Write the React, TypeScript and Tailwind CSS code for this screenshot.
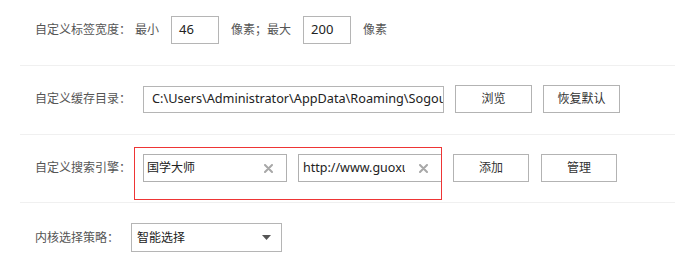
import React from "react";

const font = "font-['Noto_Sans','Noto_Sans_CJK_SC',sans-serif]";

const ClearIcon = () => (
  <svg width="9" height="9" viewBox="0 0 9 9" className="shrink-0 mr-[13px]">
    <path d="M1 1L8 8M8 1L1 8" stroke="#a8a8a8" strokeWidth="2" strokeLinecap="round" />
  </svg>
);

const Btn = ({ children, className }: { children: React.ReactNode; className?: string }) => (
  <button
    className={
      "h-[28px] border border-[#b3b3b3] bg-white text-[12px] text-[#333] flex items-center justify-center " +
      (className ?? "")
    }
  >
    {children}
  </button>
);

export default function App() {
  return (
    <div className={"w-[675px] h-[263px] bg-white text-[12px] text-[#555] overflow-hidden " + font}>
      <div className="ml-[20px]">
        {/* tab width */}
        <div className="h-[66px] border-b border-[#f0f0f0] pl-[15px] pt-[16px]">
          <div className="flex items-center h-[28px]">
            <span className="w-[100px]">自定义标签宽度：</span>
            <span>最小</span>
            <div className="ml-[12px] w-[48px] h-[28px] border border-[#b5b5b5] pl-[7px] flex items-center text-[13px] text-[#222]">
              46
            </div>
            <span className="ml-[12px]">像素；最大</span>
            <div className="ml-[12px] w-[48px] h-[28px] border border-[#b5b5b5] pl-[7px] flex items-center text-[13px] text-[#222]">
              200
            </div>
            <span className="ml-[12px]">像素</span>
          </div>
        </div>

        {/* cache dir */}
        <div className="h-[69px] border-b border-[#f0f0f0] pl-[15px] pt-[19px]">
          <div className="flex items-center h-[28px]">
            <span className="w-[108px]">自定义缓存目录：</span>
            <div className="w-[301px] h-[27px] border border-[#b5b5b5] pl-[8px] flex items-center overflow-hidden whitespace-nowrap text-[12.7px] text-[#222]">
              <span className="overflow-hidden whitespace-nowrap">C:\Users\Administrator\AppData\Roaming\Sogou</span>
            </div>
            <Btn className="ml-[11px] w-[77px]">浏览</Btn>
            <Btn className="ml-[11px] w-[77px]">恢复默认</Btn>
          </div>
        </div>

        {/* search engine */}
        <div className="relative h-[68px] border-b border-[#f0f0f0] pl-[15px] pt-[19px]">
          <div className="flex items-center h-[28px]">
            <span className="w-[108px]">自定义搜索引擎：</span>
            <div className="w-[144px] h-[28px] border border-[#b0b0b0] pl-[3px] flex items-center text-[12px] text-[#222]">
              <span className="flex-1 overflow-hidden whitespace-nowrap">国学大师</span>
              <ClearIcon />
            </div>
            <div className="ml-[11px] w-[144px] h-[28px] border border-[#b0b0b0] pl-[4px] flex items-center text-[12.5px] text-[#222]">
              <span className="flex-1 overflow-hidden whitespace-nowrap mr-[14px]">http://www.guoxu</span>
              <ClearIcon />
            </div>
            <Btn className="ml-[11px] w-[76px]">添加</Btn>
            <Btn className="ml-[12px] w-[76px]">管理</Btn>
          </div>
          <div className="absolute left-[114px] top-[12px] w-[308px] h-[53px] border border-[#ee3535] pointer-events-none" />
        </div>

        {/* kernel */}
        <div className="h-[60px] pl-[15px] pt-[20px]">
          <div className="flex items-center h-[29px]">
            <span className="w-[96px]">内核选择策略：</span>
            <div className="w-[151px] h-[29px] border border-[#b5b5b5] pl-[5px] flex items-center text-[12px] text-[#222]">
              <span className="flex-1">智能选择</span>
              <svg width="9" height="5" viewBox="0 0 9 5" className="mr-[10px]">
                <path d="M0 0H9L4.5 5Z" fill="#555" />
              </svg>
            </div>
          </div>
        </div>
      </div>
    </div>
  );
}
